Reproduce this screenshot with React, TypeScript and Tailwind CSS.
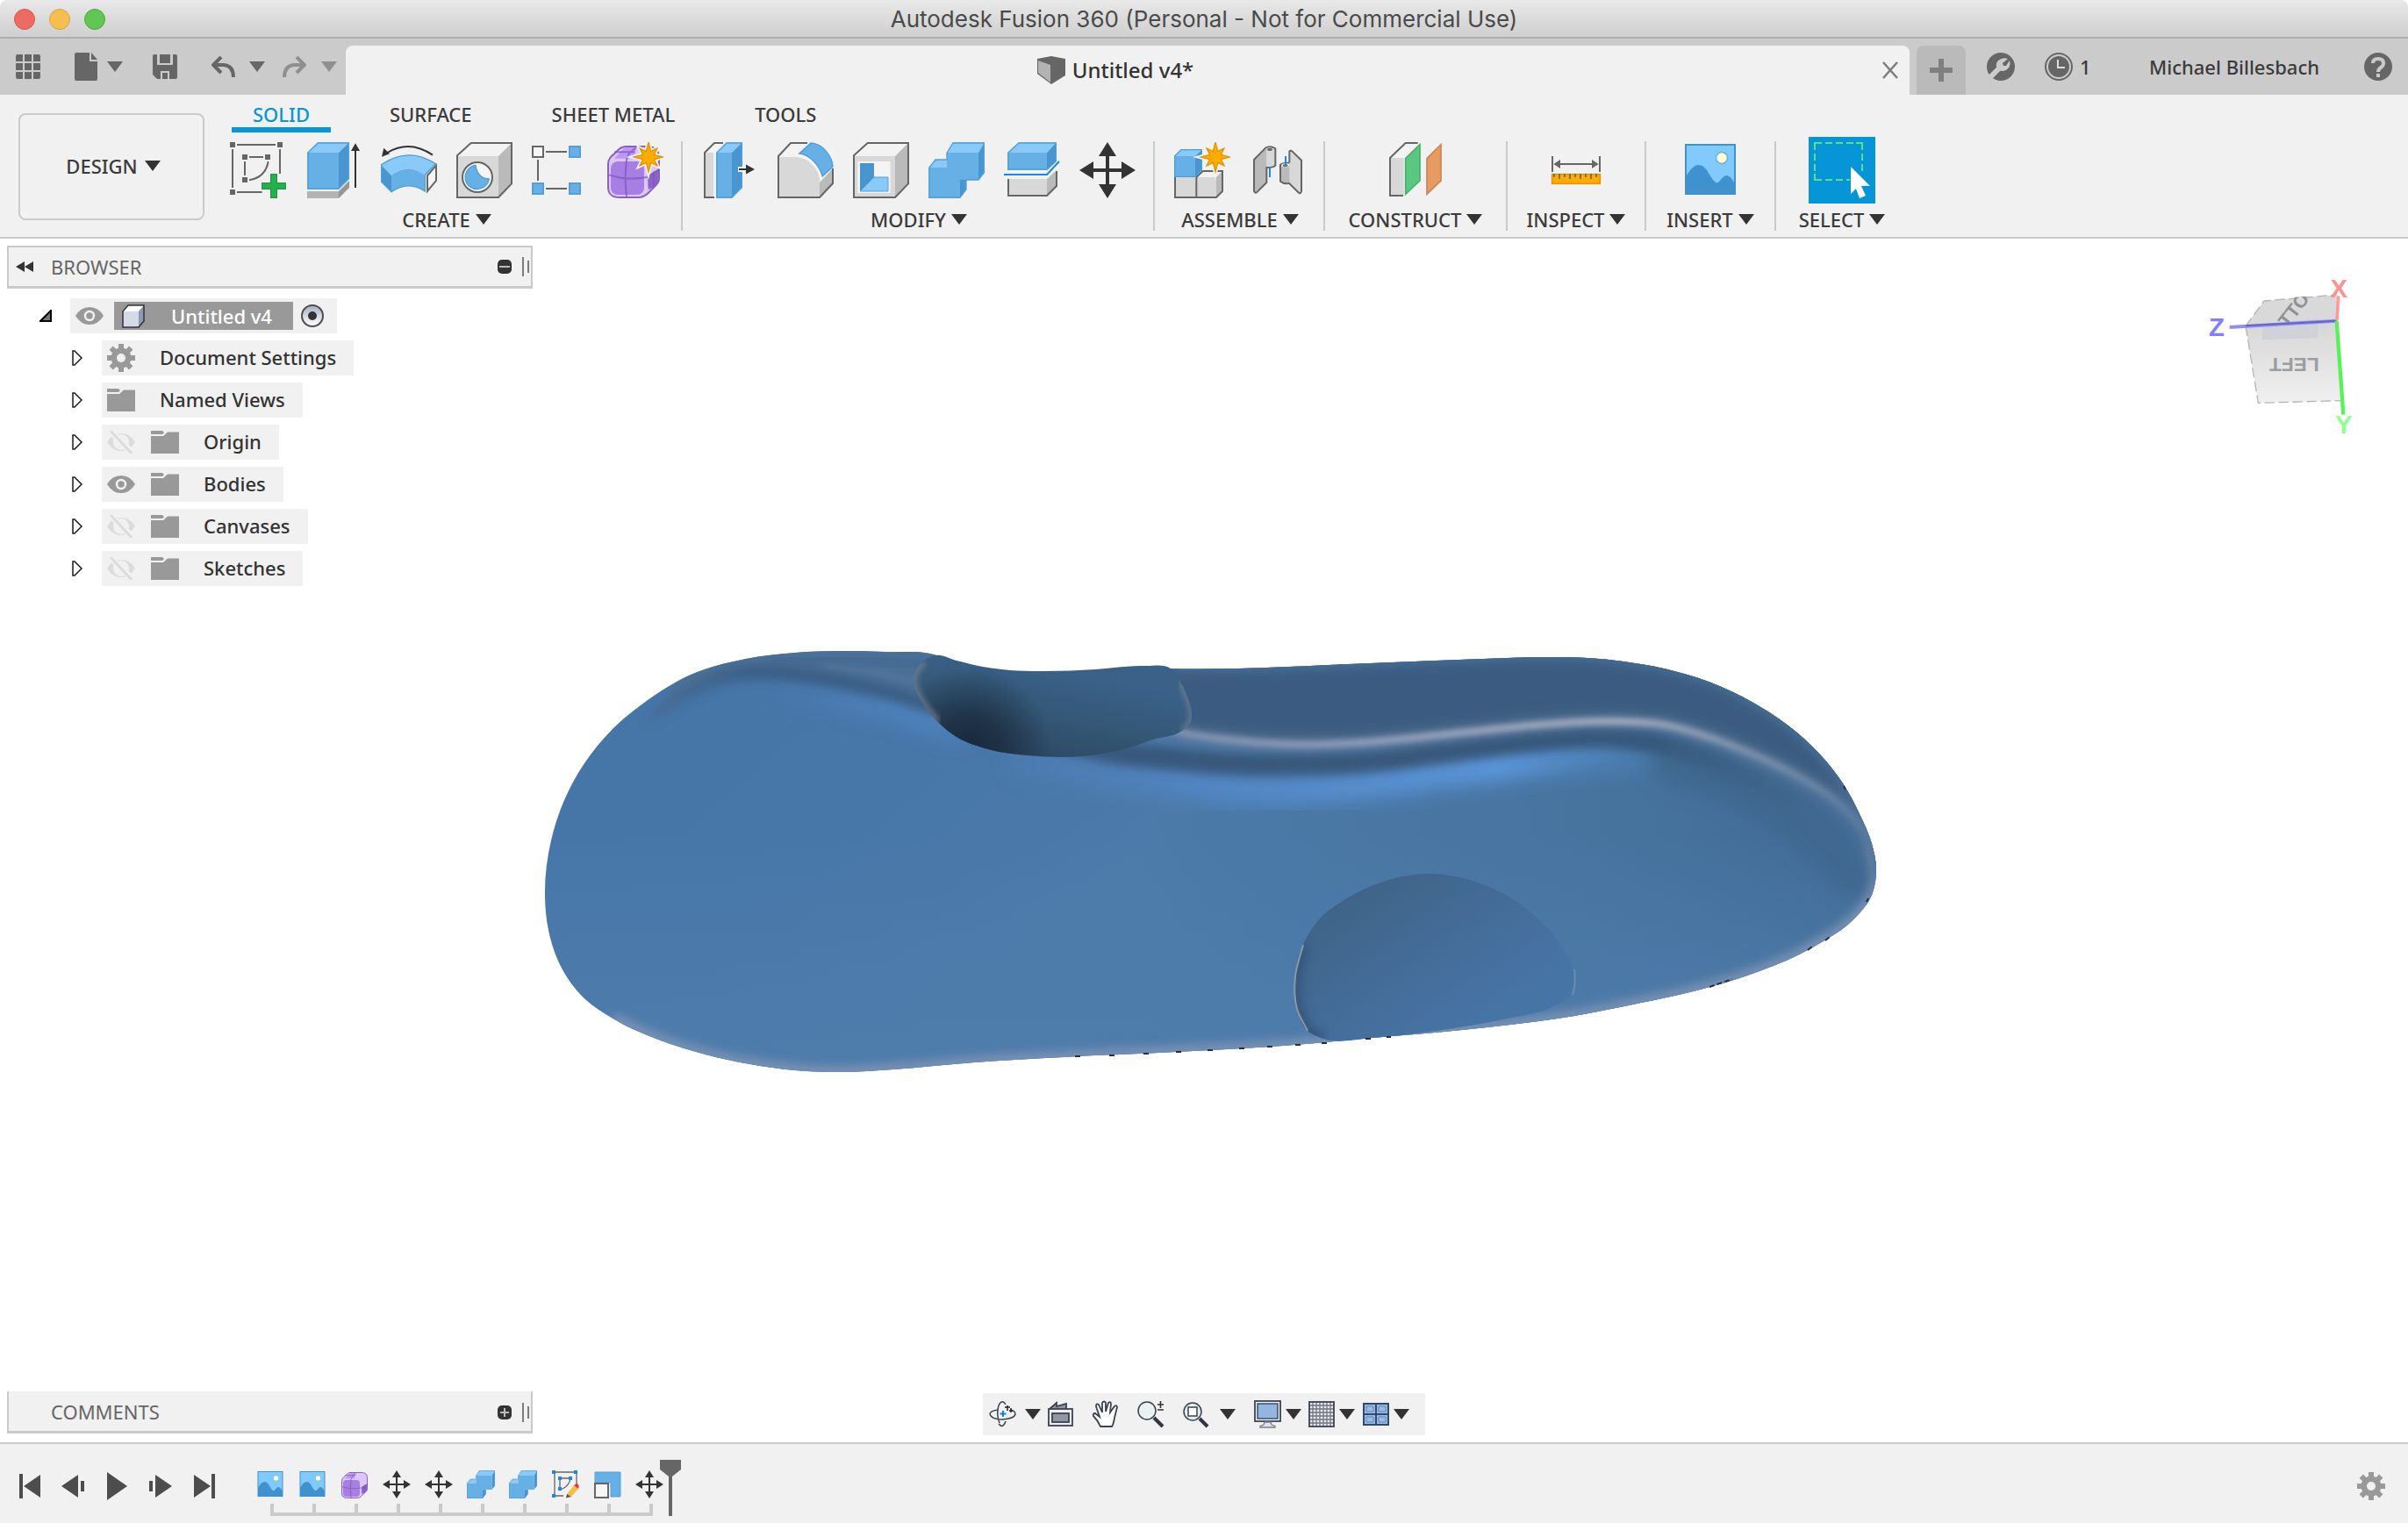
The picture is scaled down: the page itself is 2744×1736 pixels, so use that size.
import React from "react";

type Pt = [number, number];

/* Smooth curve through a list of points; tangents are weighted by segment length. */
function curve(pts: Pt[], closed = false): string {
  const n = pts.length;
  const at = (i: number): Pt => (closed ? pts[(i + n) % n] : pts[Math.max(0, Math.min(n - 1, i))]);
  const len = (a: Pt, b: Pt) => Math.hypot(b[0] - a[0], b[1] - a[1]) || 1;
  const tangent = (i: number): Pt => {
    const [a, b, c] = [at(i - 1), at(i), at(i + 1)];
    const [l0, l1] = [len(a, b), len(b, c)];
    const x = ((b[0] - a[0]) / l0) * l1 + ((c[0] - b[0]) / l1) * l0;
    const y = ((b[1] - a[1]) / l0) * l1 + ((c[1] - b[1]) / l1) * l0;
    const l = Math.hypot(x, y) || 1;
    return [x / l, y / l];
  };
  let d = `M${pts[0][0]} ${pts[0][1]}`;
  const last = closed ? n : n - 1;
  for (let i = 0; i < last; i++) {
    const [p, q] = [at(i), at(i + 1)];
    const [t, u] = [tangent(i), tangent(i + 1)];
    const k = len(p, q) / 3;
    const c = [p[0] + t[0] * k, p[1] + t[1] * k, q[0] - u[0] * k, q[1] - u[1] * k, q[0], q[1]];
    d += `C${c.map((v) => v.toFixed(1)).join(" ")}`;
  }
  return closed ? d + "Z" : d;
}

function burst(cx: number, cy: number): string {
  const out: string[] = [];
  for (let i = 0; i < 16; i++) {
    const r = i % 2 ? 21 : i % 4 === 0 ? 50 : 42;
    const a = (i * Math.PI) / 8 - Math.PI / 2;
    out.push(`${(cx + r * Math.cos(a)).toFixed(1)},${(cy + r * Math.sin(a)).toFixed(1)}`);
  }
  return out.join(" ");
}

const INK = "#666666";

const Svg = ({ box, className = "size-16", children }: { box: string; className?: string; children: React.ReactNode }) => (
  <svg viewBox={box} className={`${className} shrink-0`} fill="none" aria-hidden="true">
    {children}
  </svg>
);

const Caret = ({ className = "h-3 w-[18px] text-[#333333]" }: { className?: string }) => (
  <svg viewBox="0 0 18 12" className={`${className} shrink-0`} aria-hidden="true">
    <path d="M0 0H18L9 12Z" fill="currentColor" />
  </svg>
);

/* ---------- ribbon icons ---------- */

const SketchIcon = () => (
  <Svg box="36 36 192 192">
    <path d="M60 45H192M45 60V192M207 60V144M60 207H146M102 87H150M87 102V150M102 166Q158 156 167 102" stroke={INK} strokeWidth="6" />
    <path d="M36 36h18v18H36zM198 36h18v18h-18zM36 198h18v18H36zM78 78h18v18H78zM156 78h18v18h-18zM78 156h18v18H78z" fill={INK} />
    <path d="M176 146H196V176H226V196H196V226H176V196H146V176H176Z" fill="#27b050" stroke="#1f9a45" strokeWidth="4" />
  </Svg>
);

const ExtrudeIcon = () => (
  <Svg box="294 36 192 192">
    <path d="M300 204H408V228H300Z" fill="#b2b2b2" />
    <path d="M408 204L444 168V192L408 228Z" fill="#969696" />
    <path d="M300 72L336 36H444L408 72Z" fill="#8acafa" />
    <path d="M408 72L444 36V162L408 198Z" fill="#4895cf" />
    <path d="M300 72H408V198H300Z" fill="#67b0e5" />
    <path d="M303 72L337 39H441V160L407 195H303Z" stroke="#4f9fd9" strokeWidth="4" />
    <path d="M465 192V60" stroke="#333" strokeWidth="6" />
    <path d="M465 40L480 66H450Z" fill="#333" />
  </Svg>
);

const RevolveIcon = () => (
  <Svg box="552 36 192 192">
    <path d="M574 72Q650 26 729 80" stroke="#333" strokeWidth="6" />
    <path d="M555 86L562 56L582 76Z" fill="#333" />
    <path d="M552 113Q646 48 741 110L703 150Q646 104 588 150Z" fill="#8acafa" />
    <path d="M588 150Q646 104 703 150V206Q646 164 588 208Z" fill="#67b0e5" />
    <path d="M552 113L588 150V208L552 172Z" fill="#4895cf" />
    <path d="M554 113Q646 50 739 110L703 148V204Q646 166 588 206L554 171Z" stroke="#4f9fd9" strokeWidth="4" />
    <path d="M711 150L741 116V168L711 204Z" fill="#f4f4f4" stroke={INK} strokeWidth="6" />
  </Svg>
);

const CubeBase = () => (
  <g>
    <path d="M3 48L50 3H189L144 48Z" fill="#f3f3f3" />
    <path d="M144 48L189 3V142L144 189Z" fill="#bababa" />
    <path d="M3 48H144V189H3Z" fill="#d8d8d8" />
    <path d="M3 46L50 3H189V142L144 189H3Z" stroke={INK} strokeWidth="6" />
  </g>
);

const HoleIcon = () => (
  <Svg box="0 0 192 192">
    <CubeBase />
    <circle cx="72" cy="120" r="51" fill="#f6f6f6" stroke={INK} strokeWidth="6" />
    <path d="M66 79A41 41 0 1 0 112 126Q72 124 66 79Z" fill="#67b0e5" stroke="#4f9fd9" strokeWidth="4" />
  </Svg>
);

const ShellIcon = () => (
  <Svg box="0 0 192 192">
    <CubeBase />
    <rect x="16" y="66" width="112" height="108" fill="#f4f4f4" />
    <path d="M24 72H72V120L24 168Z" fill="#4895cf" />
    <path d="M24 168L72 120H120V168Z" fill="#8acafa" stroke="#4f9fd9" strokeWidth="3" />
  </Svg>
);

const PatternIcon = () => (
  <Svg box="1068 36 192 192">
    <path d="M1116 69H1188M1089 96V168M1116 195H1188" stroke={INK} strokeWidth="6" />
    <rect x="1071" y="51" width="36" height="36" fill="#f6f6f6" stroke={INK} strokeWidth="6" />
    {[[1197, 51], [1071, 177], [1197, 177]].map(([x, y]) => (
      <rect key={`${x}-${y}`} x={x} y={y} width="36" height="36" fill="#67b0e5" stroke="#559fd6" strokeWidth="6" />
    ))}
  </Svg>
);

const FormBody = () => (
  <g>
    <path d="M1329 110C1329 92 1340 84 1350 76L1366 60C1376 52 1384 51 1392 51H1462C1490 51 1503 62 1503 90V160C1503 172 1498 178 1492 184L1466 210C1454 222 1446 225 1432 225H1370C1338 225 1329 212 1329 190Z" fill="#dcc6fa" />
    <path d="M1350 92L1376 64C1382 56 1388 54 1396 54H1426L1416 92Z" fill="#bf97fb" />
    <rect x="1338" y="102" width="114" height="114" rx="24" fill="#a77ee4" />
    <path d="M1464 150L1504 128V164C1502 176 1490 190 1466 198Z" fill="#8d63cb" />
    <path d="M1329 112C1329 92 1340 84 1350 76L1366 60C1376 52 1384 51 1392 51H1462C1490 51 1503 62 1503 90V160C1503 172 1498 178 1492 184L1466 210C1454 222 1446 225 1432 225H1370C1338 225 1329 212 1329 190Z" stroke="#8a62bd" strokeWidth="6" />
    <path d="M1392 222Q1384 160 1392 96Q1398 70 1424 56M1332 148Q1390 168 1462 156L1504 128M1350 70H1420M1485 136V190" stroke="#7d58b5" strokeOpacity=".75" strokeWidth="6" />
  </g>
);

const FormIcon = () => (
  <Svg box="1326 36 192 192">
    <FormBody />
    <polygon points={burst(1467, 87)} fill="#fdf3da" stroke="#f1f1f1" strokeWidth="14" />
    <polygon points={burst(1467, 87)} fill="#ffab00" stroke="#e29500" strokeWidth="4" />
  </Svg>
);

const PressPullIcon = () => (
  <Svg box="0 0 64 64">
    <path d="M2 12L14 1H24L13 12V63H3Z" fill="#d8d8d8" />
    <path d="M3 12L14 1H24L14 12Z" fill="#f4f4f4" />
    <path d="M24 1H14L3 12V63H14" stroke={INK} strokeWidth="2" />
    <path d="M16 12L28 0H46L34 12Z" fill="#8acafa" />
    <path d="M34 12L46 0V52L34 64Z" fill="#4895cf" />
    <path d="M16 12H34V64H16Z" fill="#67b0e5" />
    <path d="M17 12L28 1H45V51L34 63H17Z" stroke="#4f9fd9" strokeWidth="1.3" />
    <path d="M41 31H53" stroke="#f1f1f1" strokeWidth="6" />
    <path d="M42 31H52" stroke="#333" strokeWidth="2" />
    <path d="M50 25.500L60 31L50 36.500Z" fill="#333" />
  </Svg>
);

const FilletIcon = () => (
  <Svg box="0 0 64 64">
    <path d="M1 16L15 1H34L23 16Z" fill="#f3f3f3" />
    <path d="M1 17H20C38 18 48 32 48 44V63H1Z" fill="#d8d8d8" />
    <path d="M48 46L63 30V48L48 63Z" fill="#bababa" />
    <path d="M34 1H15L1 16V63H48L63 47V30" stroke={INK} strokeWidth="2" />
    <path d="M38 1C52 2 62 16 63 28L51 39C48 26 36 14 25 13Z" fill="#67b0e5" stroke="#4f9fd9" strokeWidth="1.500" />
    <path d="M22 15C36 16 48 30 50 43" stroke="#f6f6f6" strokeWidth="2.500" />
  </Svg>
);

const CombineIcon = ({ className = "size-16" }: { className?: string }) => (
  <Svg box="0 0 64 64" className={className}>
    <path d="M21 12L28 0H64L57 12ZM0 29L8 20H21V29Z" fill="#8acafa" />
    <path d="M57 12L64 0V35L57 43ZM36 64L43 54V43H36Z" fill="#4895cf" />
    <path d="M21 12H57V43H36V64H0V29H21Z" fill="#67b0e5" />
    <path d="M21 12L28 1H63V35L57 43H43V54L36 63H1V29L8 20H21Z" stroke="#4f9fd9" strokeWidth="1.300" />
  </Svg>
);

const SplitIcon = () => (
  <Svg box="0 0 64 64">
    <path d="M4 12L17 0H60L49 12Z" fill="#8acafa" />
    <path d="M49 12L60 0V22L49 32Z" fill="#4895cf" />
    <path d="M4 12H49V32H4Z" fill="#67b0e5" />
    <path d="M5 12L17 1H59V22L49 31H5Z" stroke="#4f9fd9" strokeWidth="1.300" />
    <path d="M0 37H49L63 22" stroke="#1789e6" strokeWidth="2" />
    <path d="M5 42H49V61H5Z" fill="#d8d8d8" />
    <path d="M49 42L60 32V50L49 61Z" fill="#bababa" />
    <path d="M5 42V61H49L60 50V33" stroke={INK} strokeWidth="2" />
  </Svg>
);

const MoveIcon = ({ className = "size-16" }: { className?: string }) => (
  <Svg box="0 0 64 64" className={className}>
    <path d="M32 12V52M12 32H52" stroke="#333" strokeWidth="4" />
    <path d="M32 0L42 16H22ZM32 64L42 48H22ZM0 32L16 22V42ZM64 32L48 22V42Z" fill="#333" />
  </Svg>
);

const NewComponentIcon = () => (
  <Svg box="24 36 192 192">
    <path d="M27 156H99V225H27ZM102 156H168V225H102Z" fill="#d8d8d8" />
    <path d="M102 154L122 135H189L168 156Z" fill="#f3f3f3" />
    <path d="M168 156L189 135V204L168 225Z" fill="#bababa" />
    <path d="M27 156V225H168L189 204V135H122L100 156V225" stroke={INK} strokeWidth="6" />
    <path d="M24 84L48 60H120L96 84Z" fill="#8acafa" />
    <path d="M96 84L120 60V132L96 156Z" fill="#4895cf" />
    <path d="M24 84H96V156H24Z" fill="#67b0e5" />
    <path d="M26 84L48 62H118V130L96 154H26Z" stroke="#4f9fd9" strokeWidth="4" />
    <polygon points={burst(165, 87)} fill="#fdf3da" stroke="#f1f1f1" strokeWidth="14" />
    <polygon points={burst(165, 87)} fill="#ffab00" stroke="#e29500" strokeWidth="4" />
  </Svg>
);

const JointIcon = () => (
  <Svg box="282 36 192 192">
    <path d="M340 60V122Q352 126 370 118V60Z" fill="#d8d8d8" />
    <path d="M297 96L336 56L340 60V174L304 210L297 204Z" fill="#bababa" />
    <path d="M297 96L336 56Q352 46 370 58V116Q362 124 340 123V174L306 208Q302 212 297 204Z" stroke={INK} strokeWidth="6" />
    <ellipse cx="351" cy="61" rx="9" ry="5" fill={INK} />
    <path d="M351 124V156" stroke="#1789e6" strokeWidth="6" />
    <path d="M387 114H420V176Q402 182 387 170Z" fill="#bababa" />
    <path d="M418 66L424 64L459 98V208L453 210L418 178Z" fill="#d8d8d8" />
    <path d="M420 176Q402 182 387 170V114Q392 106 418 107M418 106V68Q422 62 428 68L459 98V204Q456 214 450 209L418 178" stroke={INK} strokeWidth="6" />
    <ellipse cx="404" cy="115" rx="13" ry="6" fill="#f3f3f3" />
    <ellipse cx="404" cy="116" rx="9" ry="4" fill={INK} />
    <path d="M405 84V118" stroke="#1789e6" strokeWidth="6" />
  </Svg>
);

const PlaneIcon = () => (
  <Svg box="756 36 192 192">
    <path d="M765 90H812V219H765Z" fill="#d8d8d8" />
    <path d="M765 90L818 39H862L814 90Z" fill="#f3f3f3" />
    <path d="M860 39H818L765 90V219H810" stroke={INK} strokeWidth="6" />
    <path d="M818 92L867 44V168L818 214Z" fill="#5bc681" stroke="#45b26c" strokeWidth="5" />
    <path d="M891 92L939 44V168L891 214Z" fill="#e69a64" stroke="#cf8350" strokeWidth="5" />
  </Svg>
);

const MeasureIcon = () => (
  <Svg box="1302 36 192 192">
    <path d="M1317 84V138M1479 84V138M1336 111H1460" stroke={INK} strokeWidth="6" />
    <path d="M1321 111L1344 96V126ZM1475 111L1452 96V126Z" fill={INK} />
    <rect x="1316" y="146" width="164" height="32" fill="#ffab00" stroke="#e29500" strokeWidth="5" />
    <path d="M1323 144V156M1341 144V162M1359 144V156M1377 144V162M1395 144V156M1413 144V162M1431 144V156M1449 144V162M1467 144V156" stroke={INK} strokeWidth="5" />
  </Svg>
);

const PictureIcon = ({ className = "size-16" }: { className?: string }) => (
  <Svg box="0 0 64 64" className={className}>
    <rect x="4" y="3" width="56" height="56" fill="#81caff" />
    <path d="M4 40C12 24 21 22 28 32C33 40 37 48 41 46C45 42 47 38 51 38C55 39 57 43 60 47V59H4Z" fill="#3f92cd" />
    <circle cx="45" cy="18" r="6.500" fill="#ffffd2" stroke="#6db0dc" strokeWidth="1.500" />
    <rect x="4" y="3" width="56" height="56" stroke="#3f92cd" strokeWidth="2" />
  </Svg>
);

const SelectIcon = () => (
  <Svg box="0 0 76 76" className="size-[76px]">
    <path d="M7 15V7H15M54 7H61V15M7 42V49H15" stroke="#5fdd8c" strokeWidth="2" />
    <path d="M19 7H27M31 7H39M43 7H51M7 19V27M7 31V39M61 19V27M61 31V39M19 49H27M31 49H39M43 49H47" stroke="#5fdd8c" strokeWidth="2" />
    <path d="M48 34V65L54 59L58 70L65 67L60 56H70Z" fill="#fff" />
  </Svg>
);

/* ---------- ribbon ---------- */

const Group = ({ label, pad, children }: { label: string; pad: string; children: React.ReactNode }) => (
  <section className={`flex h-[102px] flex-col items-center pt-px ${pad}`}>
    <div className="flex h-16 items-center gap-[22px]">{children}</div>
    <button className="mt-3 flex h-6 items-center gap-1.5 whitespace-nowrap text-[22px] leading-6 font-medium">
      {label}
      <Caret />
    </button>
  </section>
);

const Tool = ({ name, children }: { name: string; children: React.ReactNode }) => (
  <button aria-label={name} title={name}>
    {children}
  </button>
);

const Rule = () => <div className="h-[102px] w-0.5 shrink-0 bg-[#cacaca]" />;

const TitleBar = () => (
  <header className="relative flex h-11 shrink-0 items-center justify-center rounded-t-lg border-b-2 border-[#adadad] bg-linear-to-b from-[#e8e8e8] to-[#cfcfcf] pt-0.5">
    <div className="absolute left-4 flex gap-4">
      <button aria-label="Close window" className="size-6 rounded-full border border-[#d6574c] bg-[#ed6b60]" />
      <button aria-label="Minimise window" className="size-6 rounded-full border border-[#dba23c] bg-[#f5bf4f]" />
      <button aria-label="Zoom window" className="size-6 rounded-full border border-[#4da73d] bg-[#61c654]" />
    </div>
    <h1 className="font-[Inter,sans-serif] text-[26px] leading-8 text-[#4a4a4a]">Autodesk Fusion 360 (Personal - Not for Commercial Use)</h1>
  </header>
);

const TabBar = () => (
  <div className="flex h-16 shrink-0 items-end bg-[#cbcbcb] text-[#666666]">
    <div className="flex h-16 w-[394px] shrink-0 items-center pl-[18px]">
      <button aria-label="Data panel">
        <Svg box="0 0 28 28" className="size-7">
          <path d="M2 0H8V8H0V2Q0 0 2 0ZM10 0H18V8H10ZM20 0H26Q28 0 28 2V8H20ZM0 10H8V18H0ZM10 10H18V18H10ZM20 10H28V18H20ZM0 20H8V28H2Q0 28 0 26ZM10 20H18V28H10ZM20 20H28V26Q28 28 26 28H20Z" fill={INK} />
        </Svg>
      </button>
      <button aria-label="File" className="ml-[39px] flex items-center gap-[11px]">
        <Svg box="0 0 26 32" className="h-8 w-[26px]">
          <path d="M2 0H17V10H26V30Q26 32 24 32H2Q0 32 0 30V2Q0 0 2 0Z" fill={INK} />
          <path d="M19 0L26 8H19Z" fill={INK} />
        </Svg>
        <Caret className="h-3 w-[18px]" />
      </button>
      <button aria-label="Save" className="ml-[34px]">
        <Svg box="0 0 28 28" className="size-7">
          <path d="M2 0H5V12H23V0H26Q28 0 28 2V26Q28 28 26 28H5L0 23V2Q0 0 2 0Z" fill={INK} />
          <path d="M8 0H13V10H8ZM13 0H20V10H13Z" fill={INK} />
          <path d="M7 0V11H21V0" stroke="#cbcbcb" strokeWidth="2" />
          <path d="M10 28V20H18V28" stroke="#cbcbcb" strokeWidth="2" />
        </Svg>
      </button>
      <button aria-label="Undo" className="ml-[39px] flex items-center gap-4">
        <Svg box="0 0 27 24" className="h-6 w-[27px]">
          <path d="M11 1L2 10L11 19M3 10H14Q25 11 25 24" stroke={INK} strokeWidth="4" />
        </Svg>
        <Caret className="h-3 w-[18px]" />
      </button>
      <button aria-label="Redo" className="ml-[20px] flex items-center gap-[17px] text-[#8f8f8f]">
        <Svg box="0 0 27 24" className="h-6 w-[27px]">
          <path d="M16 1L25 10L16 19M24 10H13Q2 11 2 24" stroke="#8f8f8f" strokeWidth="4" />
        </Svg>
        <Caret className="h-3 w-[18px]" />
      </button>
    </div>
    <div className="relative flex h-14 flex-1 items-center justify-center rounded-t-lg bg-[#f1f1f1] pr-[28px]">
      <div className="flex items-center gap-2 text-[24px] leading-8 font-medium text-[#333333]">
        <Svg box="0 0 32 32" className="size-8">
          <path d="M0 3L16 0L32 3V22L16 32L0 20Z" fill="#666" />
          <path d="M1 5L15 10V30L1 19Z" fill="#b3b3b3" />
        </Svg>
        Untitled v4*
      </div>
      <button aria-label="Close tab" className="absolute right-3">
        <Svg box="0 0 20 20" className="size-5">
          <path d="M2 1L18 19M18 1L2 19" stroke="#7d7d7d" strokeWidth="2.500" />
        </Svg>
      </button>
    </div>
    <button aria-label="New tab" className="ml-2 flex h-14 w-14 shrink-0 items-center justify-center rounded-t-lg bg-[#bababa]">
      <Svg box="0 0 26 26" className="size-[26px]">
        <path d="M13 0V26M0 13H26" stroke="#808080" strokeWidth="6" />
      </Svg>
    </button>
    <div className="flex h-16 w-[504px] shrink-0 items-center justify-between pr-[18px] pl-6 text-[22px] font-medium text-[#3b3b3b]">
      <div className="flex items-center gap-[34px]">
        <button aria-label="Extensions">
          <Svg box="0 0 32 32" className="size-8">
            <circle cx="16" cy="16" r="16" fill={INK} />
            <path d="M2 30L14 18" stroke="#cbcbcb" strokeWidth="6" />
            <path d="M24 7L18 12L19 15L22 15L26 9Q28 16 22 20Q17 22 14 20L12 18Q9 13 13 9Q18 5 24 7Z" fill="#cbcbcb" />
          </Svg>
        </button>
        <button className="flex items-center gap-2">
          <Svg box="0 0 32 32" className="size-8">
            <circle cx="16" cy="16" r="15" stroke={INK} strokeWidth="2" />
            <circle cx="16" cy="16" r="12" fill={INK} />
            <path d="M15 8V17H23" stroke="#dedede" strokeWidth="2" />
          </Svg>
          1
        </button>
      </div>
      <div className="flex items-center gap-[51px]">
        <button>Michael Billesbach</button>
        <button aria-label="Help">
          <Svg box="0 0 32 32" className="size-8">
            <circle cx="16" cy="16" r="16" fill={INK} />
            <path d="M10 12Q10 7 16 7Q22 7 22 12Q22 15 19 17Q16 19 16 22" stroke="#cbcbcb" strokeWidth="4" />
            <path d="M14 24H18V28H14Z" fill="#cbcbcb" />
          </Svg>
        </button>
      </div>
    </div>
  </div>
);

const Ribbon = () => (
  <div className="flex h-[164px] shrink-0 border-b-2 border-[#cacaca] bg-[#f1f1f1] text-[22px] font-medium text-[#3b3b3b]">
    <button className="mt-[21px] ml-[21px] flex h-[122px] w-[212px] shrink-0 items-center justify-center gap-2 rounded-lg border-2 border-[#cacaca] pb-0.5 pl-1">
      DESIGN
      <Caret />
    </button>
    <div className="ml-[7px]">
      <nav className="flex h-[43px] gap-[43px] pl-6 [&>button]:pt-1.5">
        <button className="border-b-[6px] border-[#0696d7] px-6 text-[#0696d7]">SOLID</button>
        <button className="border-b-[6px] border-transparent px-6">SURFACE</button>
        <button className="border-b-[6px] border-transparent px-6">SHEET METAL</button>
        <button className="border-b-[6px] border-transparent px-6">TOOLS</button>
      </nav>
      <div className="mt-[10px] flex">
        <Group label="CREATE" pad="pl-[22px] pr-5">
          <Tool name="Create Sketch"><SketchIcon /></Tool>
          <Tool name="Extrude"><ExtrudeIcon /></Tool>
          <Tool name="Revolve"><RevolveIcon /></Tool>
          <Tool name="Hole"><HoleIcon /></Tool>
          <Tool name="Pattern"><PatternIcon /></Tool>
          <Tool name="Create Form"><FormIcon /></Tool>
        </Group>
        <Rule />
        <Group label="MODIFY" pad="pl-[22px] pr-5">
          <Tool name="Press Pull"><PressPullIcon /></Tool>
          <Tool name="Fillet"><FilletIcon /></Tool>
          <Tool name="Shell"><ShellIcon /></Tool>
          <Tool name="Combine"><CombineIcon /></Tool>
          <Tool name="Split Body"><SplitIcon /></Tool>
          <Tool name="Move"><MoveIcon /></Tool>
        </Group>
        <Rule />
        <Group label="ASSEMBLE" pad="pl-[22px] pr-5">
          <Tool name="New Component"><NewComponentIcon /></Tool>
          <Tool name="Joint"><JointIcon /></Tool>
        </Group>
        <Rule />
        <Group label="CONSTRUCT" pad="w-[206px]">
          <Tool name="Offset Plane"><PlaneIcon /></Tool>
        </Group>
        <Rule />
        <Group label="INSPECT" pad="w-[156px]">
          <Tool name="Measure"><MeasureIcon /></Tool>
        </Group>
        <Rule />
        <Group label="INSERT" pad="w-[146px]">
          <Tool name="Insert Image"><PictureIcon /></Tool>
        </Group>
        <Rule />
        <Group label="SELECT" pad="w-[150px]">
          <button aria-label="Select" className="-my-1.5 bg-[#0696d7]">
            <SelectIcon />
          </button>
        </Group>
      </div>
    </div>
  </div>
);

/* ---------- browser tree ---------- */

const Eye = ({ off = false }: { off?: boolean }) => (
  <Svg box="0 0 32 26" className="h-[26px] w-8">
    <path d="M0 13Q6 3 16 3T32 13Q26 23 16 23T0 13Z" fill={off ? "#dcdcdc" : "#999"} />
    <circle cx="16" cy="13" r={off ? 7 : 5} stroke="#f1f1f1" strokeWidth={off ? 4 : 2.5} fill={off ? "#f1f1f1" : "#999"} />
    {off && (
      <>
        <path d="M2 -1L31 27" stroke="#f1f1f1" strokeWidth="7" />
        <path d="M4 0L28 26" stroke="#dcdcdc" strokeWidth="3" />
      </>
    )}
  </Svg>
);

const Folder = () => (
  <Svg box="0 0 32 26" className="h-[26px] w-8">
    <path d="M0 0H13L15 2L13 4H0Z" fill="#999" />
    <path d="M0 6H14L19 1.500H32V26H0Z" fill="#999" />
  </Svg>
);

const Gear = ({ className = "size-8", hole = "#f1f1f1" }: { className?: string; hole?: string }) => (
  <Svg box="-16 -16 32 32" className={className}>
    {[0, 45, 90, 135].map((a) => (
      <rect key={a} x="-3" y="-16" width="6" height="32" fill="#999" transform={`rotate(${a})`} />
    ))}
    <circle r="11.500" fill="#999" />
    <circle r="5" fill={hole} />
  </Svg>
);

const Expander = () => (
  <button aria-label="Expand" className="mr-[22px]">
    <Svg box="0 0 12 18" className="h-[18px] w-3">
      <path d="M1 1H3L11 9L3 17H1Z" fill="#fff" stroke="#1c1c1c" strokeWidth="1.500" />
    </Svg>
  </button>
);

const rows: { label: string; icon: "gear" | "folder"; eye?: "on" | "off" }[] = [
  { label: "Document Settings", icon: "gear" },
  { label: "Named Views", icon: "folder" },
  { label: "Origin", icon: "folder", eye: "off" },
  { label: "Bodies", icon: "folder", eye: "on" },
  { label: "Canvases", icon: "folder", eye: "off" },
  { label: "Sketches", icon: "folder", eye: "off" },
];

const Grip = () => (
  <div className="flex items-center gap-1">
    <span className="h-[22px] w-0.5 bg-[#7d7d7d]" />
    <span className="h-3.5 w-0.5 bg-[#7d7d7d]" />
  </div>
);

const PanelToggle = ({ plus = false, name }: { plus?: boolean; name: string }) => (
  <button aria-label={name} className="mr-3 ml-auto">
    <Svg box="0 0 16 16" className="size-4">
      <rect width="16" height="16" rx="5" fill="#333" />
      <path d={plus ? "M3 8H13M8 3V13" : "M2 8H14"} stroke="#bbb" strokeWidth="2" />
    </Svg>
  </button>
);

const Browser = () => (
  <aside className="w-[607px] pt-2 pl-2 text-[22px] font-medium text-[#333333]">
    <div className="flex h-[49px] items-center border-2 border-b-[3px] border-[#cacaca] bg-[#f1f1f1] pr-0.5 pl-2">
      <button aria-label="Collapse browser">
        <Svg box="0 0 20 12" className="h-3 w-5">
          <path d="M10 0V12L0 6ZM20 0V12L10 6Z" fill="#333" />
        </Svg>
      </button>
      <h2 className="ml-5 font-normal text-[#666666]">BROWSER</h2>
      <PanelToggle name="Collapse tree" />
      <Grip />
    </div>
    <ul className="mt-[11px] flex flex-col gap-2">
      <li className="flex h-10 items-center pl-[37px]">
        <button aria-label="Collapse" className="mr-[21px]">
          <Svg box="0 0 14 14" className="size-3.5">
            <path d="M13 1V13H1Z" fill="#777" stroke="#000" strokeWidth="2" />
          </Svg>
        </button>
        <div className="flex h-10 items-center bg-[#f1f1f1] pr-[15px] pl-1.5">
          <Eye />
          <div className="ml-3 flex h-8 w-[204px] items-center bg-[#999999] pl-[9px] text-white">
            <Svg box="0 0 26 27" className="h-[27px] w-[26px]">
              <path d="M1 8L7 1H25L19 8V26H1Z" fill="#d3dbe8" />
              <path d="M1 8L7 1H25L19 8Z" fill="#fff" />
              <path d="M19 8L25 1V19L19 26Z" fill="#8c9ab4" />
              <path d="M1 8L7 1H25V19L19 26H1Z" stroke="#333" strokeWidth="1.500" />
            </Svg>
            <span className="ml-[30px] leading-7">Untitled v4</span>
          </div>
          <label className="ml-[9px] grid size-[26px] place-items-center">
            <input type="radio" name="component" defaultChecked aria-label="Activate Untitled v4" className="peer col-start-1 row-start-1 size-[26px] appearance-none rounded-full border-2 border-[#4d4d4d] bg-linear-to-b from-[#a9b3c9] to-white" />
            <span className="col-start-1 row-start-1 size-2.5 rounded-full bg-[#333333]" />
          </label>
        </div>
      </li>
      {rows.map((r) => (
        <li key={r.label} className="flex h-10 items-center pl-[74px]">
          <Expander />
          <div className="flex h-10 items-center bg-[#f1f1f1] pr-5 pl-1.5">
            {r.eye && (
              <button aria-label={`Toggle ${r.label}`} className="mr-[18px]">
                <Eye off={r.eye === "off"} />
              </button>
            )}
            {r.icon === "gear" ? <Gear /> : <Folder />}
            <span className="ml-7 pb-px whitespace-nowrap">{r.label}</span>
          </div>
        </li>
      ))}
    </ul>
  </aside>
);

/* ---------- view cube ---------- */

const ViewCube = () => (
  <svg viewBox="0 0 720 630" className="mt-7 mr-6 h-[210px] w-[240px] shrink-0" role="img" aria-label="View cube">
    <defs>
      <linearGradient id="cubeLeft" x1="0" y1="0" x2="0" y2="1">
        <stop offset="0" stopColor="#d6d6d6" />
        <stop offset="1" stopColor="#f0f0f0" />
      </linearGradient>
      <clipPath id="cubeTop">
        <path d="M237 215L300 125L548 104L548 197Z" />
      </clipPath>
    </defs>
    <path d="M237 215L300 129L548 108L548 197Z" fill="#d9d9d9" />
    <path d="M237 215L548 197L562 470L280 478Z" fill="url(#cubeLeft)" />
    <path d="M294 208L484 190V256L294 262Z" fill="#cfd2d6" />
    <path d="M237 215L300 129L548 108M237 215L280 478L562 470" fill="none" stroke="#b4b4b4" strokeWidth="4" strokeDasharray="34 14" />
    <g clipPath="url(#cubeTop)">
      <text transform="translate(402 160) rotate(-52)" fontFamily="Liberation Sans, sans-serif" fontSize="64" fontWeight="700" fill="#8e9092" textAnchor="middle" dominantBaseline="central">
        TTO
      </text>
    </g>
    <text transform="translate(403 347) rotate(180)" fontFamily="Liberation Sans, sans-serif" fontSize="68" fontWeight="700" fill="#9b9da1" textAnchor="middle" dominantBaseline="central">
      LEFT
    </text>
    <path d="M182 219L548 197" stroke="#8f8ffa" strokeWidth="12" />
    <path d="M237 214L548 197" stroke="#6464c8" strokeWidth="6" />
    <path d="M554 112L549 195" stroke="#ff9a9a" strokeWidth="11" />
    <path d="M548 197L571 518" stroke="#58f258" strokeWidth="13" />
    <g fontFamily="Liberation Sans, sans-serif" fontSize="88" fontWeight="700" textAnchor="middle">
      <text x="138" y="250" fill="#8080ff">Z</text>
      <text x="556" y="117" fill="#ff9090">X</text>
      <text x="572" y="581" fill="#90ff90">Y</text>
    </g>
  </svg>
);

/* ---------- solid body ---------- */

const outline: Pt[] = [
  [621, 1020], [628, 958], [643, 912], [666, 870], [698, 831], [738, 798], [785, 770], [850, 751], [906, 744],
  [957, 742], [1008, 743], [1064, 746], [1090, 756], [1120, 763], [1151, 766], [1192, 767], [1248, 765], [1304, 761], [1330, 762],
  [1411, 762], [1513, 758], [1636, 753], [1717, 750], [1768, 749], [1809, 750], [1850, 754], [1896, 762], [1947, 777], [1998, 801],
  [2049, 836], [2074, 860], [2100, 893], [2120, 930], [2133, 962], [2138, 990], [2133, 1020], [2110, 1050],
  [2074, 1075], [2044, 1091], [1982, 1115], [1921, 1132], [1870, 1143], [1794, 1158], [1666, 1174], [1564, 1183], [1462, 1192],
  [1360, 1198], [1212, 1205], [1110, 1211], [1018, 1219], [957, 1222], [906, 1220], [855, 1213], [804, 1202],
  [753, 1186], [702, 1163], [661, 1133], [636, 1095], [625, 1060],
];
const crease: Pt[] = [
  [1300, 818], [1335, 832], [1400, 843], [1462, 848], [1539, 847], [1666, 835], [1768, 825], [1829, 822], [1896, 826],
  [1947, 840], [1998, 860], [2049, 885], [2100, 920], [2130, 957], [2142, 1000],
];
const darkBand: Pt[] = [
  [1220, 846], [1273, 858], [1330, 864], [1400, 870], [1462, 871], [1564, 867], [1666, 854], [1768, 842], [1819, 839], [1870, 843],
  [1921, 855], [1972, 875], [2023, 900], [2074, 932], [2110, 970],
];
const brightBand: Pt[] = [
  [1160, 868], [1212, 874], [1314, 888], [1400, 898], [1462, 900], [1564, 892], [1666, 878], [1768, 866], [1845, 861], [1900, 872],
];
const leftDark: Pt[] = [[730, 830], [770, 800], [810, 777], [850, 767], [886, 767], [947, 775], [1008, 788], [1060, 804]];
const leftBright: Pt[] = [[880, 788], [947, 796], [1008, 808], [1050, 820], [1090, 838]];
const recess: Pt[] = [
  [1066, 747], [1052, 754], [1041, 772], [1044, 788], [1054, 805], [1069, 823], [1090, 840], [1126, 854], [1171, 861],
  [1243, 861], [1284, 853], [1314, 843], [1347, 833], [1357, 823], [1358, 813], [1354, 797], [1345, 777], [1334, 762],
  [1304, 759], [1248, 763], [1192, 765], [1151, 764], [1120, 760], [1090, 753],
];
const thumb: Pt[] = [
  [1630, 996], [1579, 1004], [1533, 1025], [1503, 1048], [1485, 1077], [1476, 1113], [1478, 1150], [1490, 1175], [1508, 1184],
  [1564, 1183], [1636, 1175], [1717, 1161], [1768, 1148], [1790, 1134], [1794, 1113], [1778, 1077], [1748, 1043], [1712, 1018], [1671, 1002],
];
const upperFace = `${curve(crease)} L2170 960 L2100 700 L1300 700 Z`;

const Body = () => (
  <svg viewBox="0 272 2744 1372" className="absolute inset-0 h-full w-full" role="img" aria-label="Solid body">
    <defs>
      <linearGradient id="base" x1="621" y1="800" x2="1000" y2="1230" gradientUnits="userSpaceOnUse">
        <stop offset="0" stopColor="#4675a8" />
        <stop offset=".6" stopColor="#4776a9" />
        <stop offset="1" stopColor="#4c7aa9" />
      </linearGradient>
      <linearGradient id="rightTone" x1="1300" y1="0" x2="2140" y2="0" gradientUnits="userSpaceOnUse">
        <stop offset="0" stopColor="#46739c" stopOpacity="0" />
        <stop offset=".6" stopColor="#46739e" stopOpacity=".9" />
        <stop offset="1" stopColor="#406a96" />
      </linearGradient>
      <linearGradient id="lowTone" x1="0" y1="950" x2="0" y2="1210" gradientUnits="userSpaceOnUse">
        <stop offset="0" stopColor="#4e7cab" stopOpacity="0" />
        <stop offset="1" stopColor="#4e7cab" />
      </linearGradient>
      <linearGradient id="creaseTone" x1="1300" y1="0" x2="2140" y2="0" gradientUnits="userSpaceOnUse">
        <stop offset="0" stopColor="#7f92b0" />
        <stop offset=".4" stopColor="#97a3bb" />
        <stop offset=".65" stopColor="#a5adbd" />
        <stop offset="1" stopColor="#54789f" />
      </linearGradient>
      <linearGradient id="brightTone" x1="1160" y1="0" x2="1900" y2="0" gradientUnits="userSpaceOnUse">
        <stop offset="0" stopColor="#5083bd" stopOpacity=".3" />
        <stop offset=".3" stopColor="#5287c6" />
        <stop offset=".75" stopColor="#5b97dc" />
        <stop offset="1" stopColor="#5289c4" stopOpacity=".2" />
      </linearGradient>
      <linearGradient id="darkFade" x1="1200" y1="0" x2="2110" y2="0" gradientUnits="userSpaceOnUse">
        <stop offset="0" stopColor="#38597c" />
        <stop offset=".75" stopColor="#36587b" />
        <stop offset="1" stopColor="#40678f" stopOpacity=".3" />
      </linearGradient>
      <linearGradient id="leftFade" x1="730" y1="0" x2="860" y2="0" gradientUnits="userSpaceOnUse">
        <stop offset="0" stopColor="#3a5d84" stopOpacity="0" />
        <stop offset="1" stopColor="#3a5d84" />
      </linearGradient>
      <linearGradient id="leftBrightFade" x1="880" y1="0" x2="1090" y2="0" gradientUnits="userSpaceOnUse">
        <stop offset="0" stopColor="#5086c2" stopOpacity="0" />
        <stop offset=".8" stopColor="#5086c2" />
        <stop offset="1" stopColor="#5086c2" stopOpacity=".6" />
      </linearGradient>
      <linearGradient id="recessTone" x1="1180" y1="864" x2="1200" y2="762" gradientUnits="userSpaceOnUse">
        <stop offset="0" stopColor="#2c4963" />
        <stop offset=".45" stopColor="#345775" />
        <stop offset="1" stopColor="#3b6189" />
      </linearGradient>
      <radialGradient id="recessShade" cx="1106" cy="852" r="92" gradientUnits="userSpaceOnUse">
        <stop offset="0" stopColor="#1a2a3d" />
        <stop offset=".35" stopColor="#1a2a3d" stopOpacity=".8" />
        <stop offset="1" stopColor="#1a2a3d" stopOpacity="0" />
      </radialGradient>
      <linearGradient id="thumbTone" x1="1570" y1="1000" x2="1680" y2="1170" gradientUnits="userSpaceOnUse">
        <stop offset="0" stopColor="#3f6488" />
        <stop offset=".5" stopColor="#446c98" />
        <stop offset="1" stopColor="#4674a5" />
      </linearGradient>
      <filter id="b3" x="-10%" y="-30%" width="120%" height="160%"><feGaussianBlur stdDeviation="3" /></filter>
      <filter id="b6" x="-20%" y="-40%" width="140%" height="180%"><feGaussianBlur stdDeviation="6" /></filter>
      <filter id="b12" x="-20%" y="-60%" width="140%" height="220%"><feGaussianBlur stdDeviation="11" /></filter>
      <clipPath id="bodyClip"><path d={curve(outline, true)} /></clipPath>
      <clipPath id="recessClip"><path d={curve(recess, true)} /></clipPath>
      <clipPath id="thumbClip"><path d={curve(thumb, true)} /></clipPath>
    </defs>
    <g clipPath="url(#bodyClip)" fill="none" strokeLinecap="round">
      <rect x="600" y="720" width="1560" height="520" fill="url(#base)" />
      <rect x="1300" y="720" width="860" height="520" fill="url(#rightTone)" />
      <rect x="600" y="950" width="1560" height="290" fill="url(#lowTone)" />
      <path d={curve(outline.slice(33, 56))} stroke="#8195b5" strokeWidth="12" filter="url(#b6)" />
      <path d={`${curve(leftDark)} L1080 720 L820 720 Z`} fill="#4b6f98" filter="url(#b3)" />
      <path d={curve([[880, 752], [960, 752], [1060, 758]])} stroke="#426690" strokeWidth="8" filter="url(#b6)" />
      <path d={curve([[940, 760], [1000, 768], [1050, 780]])} stroke="#55759d" strokeWidth="6" filter="url(#b3)" />
      <path d={curve(leftBright)} stroke="url(#leftBrightFade)" strokeWidth="22" filter="url(#b12)" />
      <path d={curve(leftDark)} stroke="url(#leftFade)" strokeWidth="16" filter="url(#b6)" />
      <path d={curve(brightBand)} stroke="url(#brightTone)" strokeWidth="34" filter="url(#b12)" />
      <path d={curve([[1900, 872], [1980, 900], [2060, 950], [2110, 1000]])} stroke="#40688f" strokeWidth="40" filter="url(#b12)" />
      <path d={upperFace} fill="#3a5b80" filter="url(#b3)" />
      <path d={curve([[1300, 756], [1411, 758], [1636, 749], [1768, 745], [1850, 750], [1947, 773], [2049, 832], [2104, 893], [2136, 960]])} stroke="#4a7099" strokeWidth="14" filter="url(#b6)" />
      <path d={curve(darkBand)} stroke="url(#darkFade)" strokeWidth="26" filter="url(#b6)" />
      <path d={curve(crease)} stroke="#5c7698" strokeWidth="20" strokeOpacity=".6" filter="url(#b6)" />
      <path d={curve(crease)} stroke="url(#creaseTone)" strokeWidth="8" filter="url(#b3)" />
    </g>
    <g clipPath="url(#recessClip)">
      <rect x="1030" y="730" width="340" height="140" fill="url(#recessTone)" />
      <rect x="1010" y="730" width="360" height="140" fill="url(#recessShade)" />
      <path d={curve(recess.slice(1, 6))} fill="none" stroke="#7d8893" strokeWidth="8" strokeOpacity=".7" filter="url(#b3)" />
      <path d={curve(recess.slice(12, 17))} fill="none" stroke="#7d8893" strokeWidth="6" strokeOpacity=".7" filter="url(#b3)" />
    </g>
    <g clipPath="url(#thumbClip)">
      <rect x="1460" y="980" width="350" height="220" fill="url(#thumbTone)" />
      <path d={curve(thumb.slice(4, 9))} fill="none" stroke="#34557a" strokeWidth="14" filter="url(#b6)" />
    </g>
    <path d={curve(thumb.slice(4, 8))} fill="none" stroke="#8a97a8" strokeWidth="2" />
    <path d="M1794 1105Q1796 1120 1792 1134" fill="none" stroke="#6d8bb0" strokeWidth="2" />
    <path d="M1225 1204h8M1264 1203h8M1303 1201h9M1340 1199h9M1376 1197h9M1412 1195h8M1444 1193h8M1476 1191h6M1506 1189h6M1556 1184h6M1580 1182h5M1948 1125l26 -9M2060 1083l6 -5M2080 1072l6 -5" stroke="#26303a" strokeWidth="2" strokeDasharray="6 3" />
    <path d="M2101 896l2 4M2129 1024l-2 4" stroke="#26303a" strokeWidth="2" />
  </svg>
);

/* ---------- bottom bars ---------- */

const line = { stroke: "#3b4250", strokeWidth: 1.8 };

const NavBar = () => (
  <div className="flex h-12 items-center bg-[#f1f1f1] pr-[18px] pl-1.5">
    <button aria-label="Orbit" className="flex items-center gap-[10px]">
      <Svg box="0 0 32 32" className="size-8">
        <path d="M13 26Q9 16 12 6Q16 -2 20 5M20 24Q17 33 12 27M12 11Q2 12 2 16Q4 22 16 22Q30 21 31 16Q31 12 25 11" stroke="#3b4250" strokeWidth="1.500" />
        <path d="M19 8H25M22 6V12M24 12H28M26 9V14" stroke="#222" strokeWidth="1.500" />
        <path d="M17 12V19M13.500 15.500H20.500" stroke="#0a84e0" strokeWidth="2" />
      </Svg>
      <Caret />
    </button>
    <button aria-label="Look at" className="ml-2">
      <Svg box="0 0 30 32" className="h-8 w-[30px]">
        <path d="M2 10L10 3L10 7L21 4V10" fill="#8b93a3" {...line} />
        <rect x="1" y="10" width="27" height="19" fill="#eceef2" {...line} />
        <rect x="5" y="15" width="19" height="10" fill="#8f97a5" {...line} />
      </Svg>
    </button>
    <button aria-label="Pan" className="ml-5">
      <Svg box="0 0 32 32" className="size-8">
        <path d="M10 30Q7 23 2 18Q1 15 4 15L9 19L5 7Q5 3 8 5L12 14L12 3Q14 0 16 3V13L19 3Q22 1 22 4L21 14L26 7Q29 5 29 8L26 20Q25 27 23 30Z" fill="#fff" {...line} />
      </Svg>
    </button>
    <button aria-label="Zoom" className="ml-5">
      <Svg box="0 0 32 32" className="size-8">
        <circle cx="11" cy="12" r="10" fill="#eaf1f2" stroke="#3b4250" strokeWidth="1.500" />
        <path d="M19 20L29 30" stroke="#2f3542" strokeWidth="4" />
        <path d="M23 5H30M26.500 1V9M23 11H30" stroke="#333" strokeWidth="1.600" />
      </Svg>
    </button>
    <button aria-label="Fit" className="ml-[19px] flex items-center gap-[11px]">
      <Svg box="0 0 32 32" className="size-8">
        <circle cx="12" cy="13" r="10" fill="#e4ecee" stroke="#3b4250" strokeWidth="1.500" />
        <rect x="7" y="8" width="10" height="10" fill="#fff" stroke="#3b4250" strokeWidth="1.500" />
        <path d="M20 21L29 30" stroke="#2f3542" strokeWidth="4" />
      </Svg>
      <Caret />
    </button>
    <button aria-label="Display settings" className="ml-[21px] flex items-center gap-1">
      <Svg box="0 0 32 32" className="size-8">
        <rect x="1" y="1" width="29" height="23" fill="#f8f8fa" {...line} />
        <rect x="4" y="4" width="23" height="17" fill="#94b5de" stroke="#2f4f80" strokeWidth="1.500" />
        <path d="M12 25H19L20 28L24 29.500V31H7V29.500L11 28Z" fill="#dfe2e8" stroke="#777e8a" strokeWidth="1.300" />
      </Svg>
      <Caret />
    </button>
    <button aria-label="Grid and snaps" className="ml-2 flex items-center gap-[5px]">
      <Svg box="0 0 30 30" className="size-[30px]">
        <rect x="1" y="1" width="28" height="28" fill="#e9eaee" />
        <path d="M5 1V29M9 1V29M13 1V29M17 1V29M21 1V29M25 1V29M1 5H29M1 9H29M1 13H29M1 17H29M1 21H29M1 25H29" stroke="#70747f" strokeWidth="1.300" />
        <rect x="1" y="1" width="28" height="28" {...line} />
      </Svg>
      <Caret />
    </button>
    <button aria-label="Viewports" className="ml-[9px] flex items-center gap-[5px]">
      <Svg box="0 0 30 28" className="h-7 w-[30px]">
        <rect x="1" y="2" width="28" height="24" fill="#9bbbe0" stroke="#2d4a73" strokeWidth="2" />
        <path d="M15 2V26M1 14H29" stroke="#2d4a73" strokeWidth="2" />
        <path d="M4 5H12V11H4ZM18 5H26V11H18ZM4 17H12V23H4ZM18 17H26V23H18Z" stroke="#5f86b8" />
      </Svg>
      <Caret />
    </button>
  </div>
);

const SketchMini = () => (
  <Svg box="0 0 32 32" className="size-8">
    <path d="M4 2V28M4 2H28M29 2V16M4 29H14M10 9V21M10 9H22Q21 18 11 22" stroke={INK} strokeWidth="1.300" />
    <path d="M1 0h4v4H1zM26 0h4v4h-4zM1 27h4v4H1zM8 7h4v4H8zM20 7h4v4h-4zM8 19h4v4H8z" fill="#1789e6" />
    <path d="M18 27L26 17L31 21L23 30Z" fill="#f8bb45" />
    <path d="M26 17L29 15Q33 16 31 21Z" fill="#e8333f" />
    <path d="M18 27L23 30L17 31.500Z" fill="#555" />
  </Svg>
);

const ScaleMini = () => (
  <Svg box="0 0 32 32" className="size-8">
    <path d="M2 2H31V30H20V14H2Z" fill="#67b0e5" stroke="#559fd6" />
    <rect x="2" y="15" width="15" height="16" fill="#f6f6f6" stroke={INK} strokeWidth="2" />
  </Svg>
);

const FormMini = () => (
  <Svg box="1320 36 192 192" className="size-8">
    <FormBody />
  </Svg>
);

const Playback = ({ name, w, box, size, d }: { name: string; w: string; box: string; size: string; d: string }) => (
  <button aria-label={name} className={`flex h-8 items-center ${w}`}>
    <Svg box={box} className={size}>
      <path d={d} fill="#4d4d4d" />
    </Svg>
  </button>
);

const Timeline = () => (
  <footer className="flex h-[92px] shrink-0 items-start border-t-2 border-[#cacaca] bg-[#f1f1f1] pr-[26px] pl-[22px]">
    <div className="mt-8 flex w-[270px] shrink-0">
      <Playback name="Go to start" w="w-12" box="0 0 24 28" size="h-7 w-6" d="M0 0H4V28H0ZM24 1V27L5 14Z" />
      <Playback name="Step back" w="w-[52px]" box="0 0 26 28" size="h-7 w-[26px]" d="M19 1V27L0 14ZM22 8H26V20H22Z" />
      <Playback name="Play" w="w-12" box="0 0 23 32" size="h-8 w-[23px]" d="M0 0L23 16L0 32Z" />
      <Playback name="Step forward" w="w-[51px]" box="0 0 26 28" size="h-7 w-[26px]" d="M7 1V27L26 14ZM0 8H4V20H0Z" />
      <Playback name="Go to end" w="w-12" box="0 0 24 28" size="h-7 w-6" d="M0 1V27L19 14ZM20 0H24V28H20Z" />
    </div>
    <div className="mt-[30px]">
      <div className="flex gap-4">
        <Tool name="Canvas 1"><PictureIcon className="size-8" /></Tool>
        <Tool name="Canvas 2"><PictureIcon className="size-8" /></Tool>
        <Tool name="Form 1"><FormMini /></Tool>
        <Tool name="Move 1"><MoveIcon className="size-8" /></Tool>
        <Tool name="Move 2"><MoveIcon className="size-8" /></Tool>
        <Tool name="Combine 1"><CombineIcon className="size-8" /></Tool>
        <Tool name="Combine 2"><CombineIcon className="size-8" /></Tool>
        <Tool name="Sketch 1"><SketchMini /></Tool>
        <Tool name="Scale 1"><ScaleMini /></Tool>
        <Tool name="Move 3"><MoveIcon className="size-8" /></Tool>
      </div>
      <div className="mt-1.5 ml-4 flex h-3.5 w-[436px] justify-between border-b-4 border-[#cacaca]">
        {Array.from({ length: 10 }, (_, i) => (
          <span key={i} className="h-3 w-1 bg-[#cacaca]" />
        ))}
      </div>
    </div>
    <Svg box="0 0 24 64" className="-ml-1 mt-[18px] h-16 w-6">
      <path d="M0 0H24V11L14 19V64H10V19L0 11Z" fill="#666" />
    </Svg>
    <button aria-label="Timeline settings" className="mt-8 ml-auto">
      <Gear />
    </button>
  </footer>
);

export default function App() {
  return (
    <div className="flex min-h-screen flex-col bg-white font-['Noto_Sans',sans-serif]">
      <TitleBar />
      <TabBar />
      <Ribbon />
      <main className="relative flex flex-1 flex-col justify-between">
        <Body />
        <div className="relative flex justify-between">
          <Browser />
          <ViewCube />
        </div>
        <div className="relative grid grid-cols-[1fr_auto_1fr] items-end pb-2">
          <div className="mb-0.5 ml-2 flex h-12 w-[599px] items-center border-x-2 border-b-[3px] border-[#cacaca] bg-[#f1f1f1] pt-0.5 pr-0.5 pl-12 text-[22px] text-[#666666]">
            <h2>COMMENTS</h2>
            <PanelToggle plus name="Expand comments" />
            <Grip />
          </div>
          <NavBar />
        </div>
      </main>
      <Timeline />
    </div>
  );
}
